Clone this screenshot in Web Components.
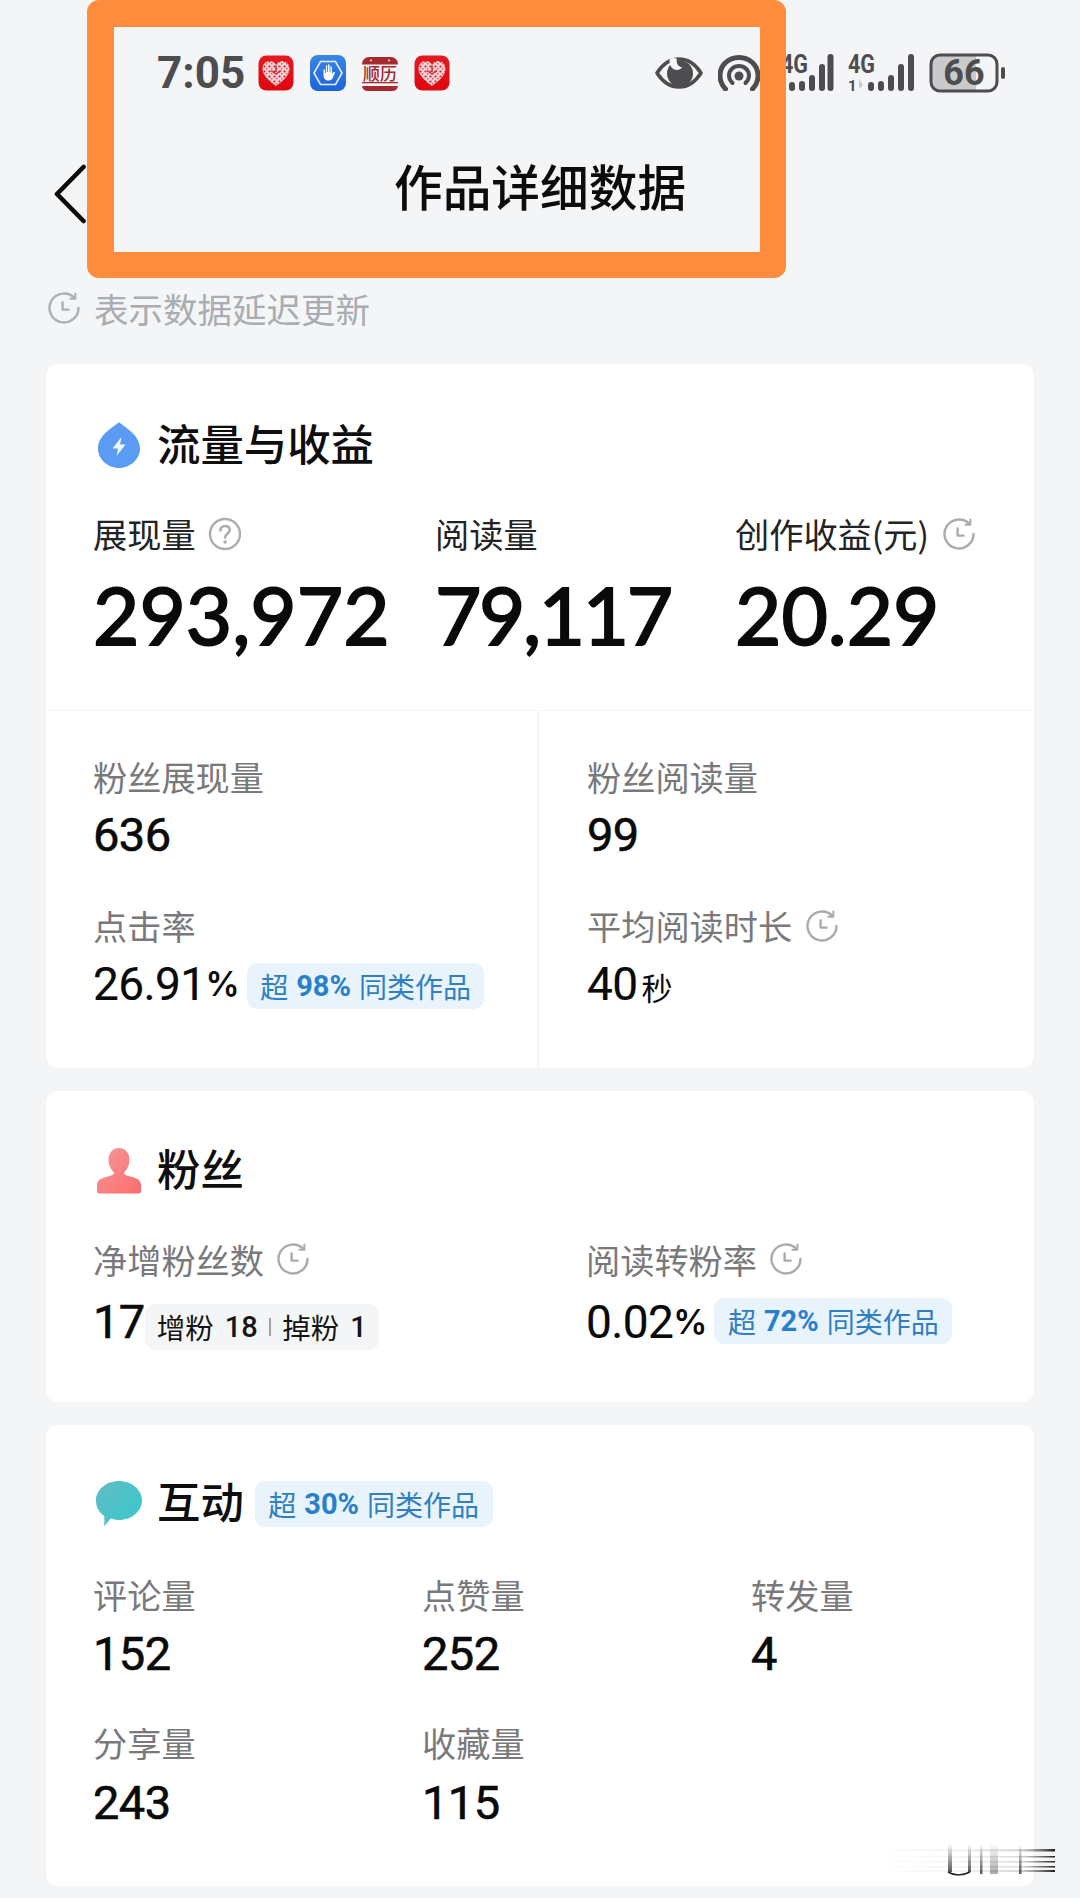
<!DOCTYPE html>
<html lang="zh">
<head>
<meta charset="utf-8">
<title>作品详细数据</title>
<style>
  html, body { margin: 0; padding: 0; }
  body {
    width: 1080px;
    height: 1898px;
    overflow: hidden;
    position: relative;
    background: #f4f5f7;
    font-family: "Noto Sans CJK SC", "Noto Sans", sans-serif;
  }
  stat-card { margin: 0 46px 23px; }
</style>
</head>
<body>
  <status-bar></status-bar>
  <app-header>作品详细数据</app-header>
  <delay-note>表示数据延迟更新</delay-note>

  <stat-card icon="drop" heading="流量与收益" style="--head-top:51px">
    <div slot="top" style="display:contents">
      <metric-item big label="展现量" value="293,972" mark="help"></metric-item>
      <metric-item big label="阅读量" value="79,117" style="--big-ls:-2.4px"></metric-item>
      <metric-item big label="创作收益(元)" value="20.29" mark="clock"></metric-item>
    </div>
    <metric-item label="粉丝展现量" value="636" style="--num-gap:8px"></metric-item>
    <metric-item label="粉丝阅读量" value="99" style="--num-gap:8px"></metric-item>
    <metric-item label="点击率" value="26.91" unit="%" style="--num-gap:8px"><beat-tag pct="98%" style="margin-top:4px"></beat-tag></metric-item>
    <metric-item label="平均阅读时长" value="40" unit="秒" mark="clock" style="--num-gap:8px"></metric-item>
  </stat-card>

  <stat-card icon="person" heading="粉丝" layout="pair" style="--head-top:50px">
    <metric-item label="净增粉丝数" value="17" mark="clock" style="--num-gap:12px"><split-tag></split-tag></metric-item>
    <metric-item label="阅读转粉率" value="0.02" unit="%" mark="clock" style="--num-gap:12px"><beat-tag pct="72%" style="margin-top:-2px"></beat-tag></metric-item>
  </stat-card>

  <stat-card icon="bubble" heading="互动" layout="triple" style="--head-top:49px">
    <beat-tag slot="head" pct="30%"></beat-tag>
    <metric-item label="评论量" value="152"></metric-item>
    <metric-item label="点赞量" value="252"></metric-item>
    <metric-item label="转发量" value="4"></metric-item>
    <metric-item label="分享量" value="243" style="--num-gap:10px"></metric-item>
    <metric-item label="收藏量" value="115" style="--num-gap:10px"></metric-item>
  </stat-card>

  <mark-box></mark-box>
  <fade-mark></fade-mark>

<script>
(function() {
	const CJK = '"Noto Sans CJK SC", "Noto Sans", sans-serif';
	const INK = '#4d4d4f';

	function define(name, css, html, setup) {
		const template = document.createElement('template');
		template.innerHTML = `<style>${css}</style>${html}`;
		customElements.define(name, class extends HTMLElement {
			connectedCallback() {
				if (this.shadowRoot) return;
				this.attachShadow({ mode: 'open' });
				this.shadowRoot.appendChild(template.content.cloneNode(true));
				if (setup) setup(this, this.shadowRoot);
			}
		});
	}

	// clock with a little refresh tail, used next to delayed numbers
	const clockSvg = (size, color) => `<svg width="${size}" height="${size}" viewBox="0 0 34 34" fill="none" stroke="${color}" stroke-width="2.4" stroke-linecap="round" stroke-linejoin="round">
		<path d="M31.5 17A14.5 14.5 0 1 1 27.6 7.1"/><path d="M28.4 2.6V7.8H23.4" stroke-width="2"/><path d="M15.6 11.5V18.6H21.6"/></svg>`;
	const helpSvg = (size) => `<svg width="${size}" height="${size}" viewBox="0 0 34 34" fill="none"><circle cx="17" cy="17" r="15" stroke="#adadad" stroke-width="2.4"/>
		<path d="M12.4 13.4c0-2.7 2-4.4 4.7-4.4s4.6 1.6 4.6 4c0 3.7-4.6 3.8-4.6 7.6" stroke="#adadad" stroke-width="2.6" stroke-linecap="round"/><circle cx="17.1" cy="25" r="1.8" fill="#adadad"/></svg>`;

	const heartIcon = (id) => `<svg width="36" height="36" viewBox="0 0 36 36">
		<defs><pattern id="${id}" width="5" height="5" patternUnits="userSpaceOnUse"><rect width="5" height="5" fill="#f6d0d2"/><circle cx="1.5" cy="1.5" r="1.1" fill="#c9242e"/><rect x="3" y="3" width="1.4" height="1.4" fill="#d8505a"/></pattern>
		<linearGradient id="${id}g" x1="0" y1="0" x2="0" y2="1"><stop offset="0" stop-color="#e41a20"/><stop offset="1" stop-color="#de0710"/></linearGradient></defs>
		<rect x=".5" y=".5" width="35" height="35" rx="8" fill="url(#${id}g)"/>
		<path d="M18 31C11 26 4.500 20.500 4.500 13.500 4.500 9 8 6 11.800 6 14.500 6 16.800 7.500 18 10 19.200 7.500 21.500 6 24.200 6 28 6 31.500 9 31.500 13.500 31.500 20.500 25 26 18 31Z" fill="url(#${id})"/>
		<path d="M18 10.500V17M13 15.500 18 19 23 15.500" stroke="#c9242e" stroke-width="1.400" fill="none"/></svg>`;

	define('status-bar', `
		:host { display: flex; align-items: center; height: 54px; margin-top: 46px; padding-left: 157px; box-sizing: border-box; color: ${INK}; }
		.time { font: 700 44px/54px Roboto, sans-serif; width: 88px; margin-right: 13px; white-space: nowrap; }
		.apps { display: flex; gap: 16px; }
		.apps svg, .sys svg { display: block; }
		.sys { display: flex; align-items: center; margin-left: 205px; }
		text { font-family: Roboto, sans-serif; font-weight: 700; fill: ${INK}; }
		.cal { font-family: ${CJK}; font-weight: 500; fill: #a02a2e; }
	`, `
		<div class="time">7:05</div>
		<div class="apps">
			${heartIcon('pddA')}
			<svg width="36" height="36" viewBox="0 0 36 36">
				<defs><linearGradient id="shield" x1="0" y1="0" x2="0" y2="1"><stop offset="0" stop-color="#3c86e4"/><stop offset="1" stop-color="#1c62dc"/></linearGradient></defs>
				<rect width="36" height="36" rx="8" fill="url(#shield)"/>
				<path d="M10.500 6.500H25.500L32 18 25.500 29.500H10.500L4 18Z" fill="none" stroke="#e6f0ff" stroke-width="1.600"/>
				<path d="M13.500 14.500V20c0 3.500 2 5.500 5 5.500 2.800 0 4-1.500 4.600-3.500l2-4.500-1.500-.8-1.700 2.400V11.500h-1.500V17h-.8V9.500h-1.700V17h-.8V10.500H15.900V18h-.8V14.500Z" fill="#fff"/>
			</svg>
			<svg width="36" height="36" viewBox="0 0 36 36" style="overflow:hidden">
				<path d="M0 9a7 7 0 0 1 7-7H29a7 7 0 0 1 7 7V9.500H0Z" fill="#a52b30"/>
				<path d="M0 31H36a6 6 0 0 1-6 5H6a6 6 0 0 1-6-5Z" fill="#a52b30"/>
				<rect y="27" width="36" height="1.300" fill="#a52b30"/>
				<circle cx="9" cy="5.500" r="1" fill="#f3d9d9"/><circle cx="27" cy="5.500" r="1" fill="#f3d9d9"/>
				<text class="cal" x="18" y="24.500" font-size="17" text-anchor="middle">顺历</text>
			</svg>
			${heartIcon('pddB')}
		</div>
		<div class="sys">
			<svg width="48" height="32" viewBox="0 0 48 32" style="margin-right:15px">
				<path d="M2 16C8 6.500 15.500 2 24 2s16 4.500 22 14C40 25.500 32.500 30 24 30S8 25.500 2 16Z" fill="none" stroke="${INK}" stroke-width="3.600" stroke-linejoin="round"/>
				<circle cx="25" cy="16.500" r="13" fill="${INK}"/>
				<path d="M14 5.500a11 11 0 0 1 8 0c-1 5 1 9 6 10-2 3.500-8 4-11 1.500-3-3-4.500-7.500-3-11.500Z" fill="#f4f5f7" transform="translate(3 -3) scale(.86)"/>
			</svg>
			<svg width="42" height="36" viewBox="0 0 42 36" style="margin-right:10px" fill="none" stroke="${INK}" stroke-linecap="round">
				<path d="M7.500 34C3.600 30 2 25.500 2 21 2 10.500 10 2.500 21 2.500S40 10.500 40 21c0 4.500-1.600 9-5.500 13" stroke-width="5"/>
				<path d="M14.500 28C12 25.500 11 23 11 20.500 11 15 15.500 11 21 11s10 4 10 9.500c0 2.500-1 5-3.500 7.500" stroke-width="4"/>
				<circle cx="21" cy="21" r="4.500" fill="${INK}" stroke="none"/>
			</svg>
			<svg width="64" height="54" viewBox="0 -8 64 54" style="margin-right:5px">
				<text x="38" y="19" font-size="25" text-anchor="end" textLength="27" lengthAdjust="spacingAndGlyphs">4G</text>
				<rect x="19" y="28" width="6" height="9" rx="3" fill="${INK}"/><rect x="29" y="27" width="6" height="10" rx="3" fill="${INK}"/><rect x="39" y="21" width="6" height="16" rx="3" fill="${INK}"/><rect x="49" y="10" width="6" height="27" rx="3" fill="${INK}"/><rect x="57.500" y="0" width="6" height="37" rx="3" fill="${INK}"/>
			</svg>
			<svg width="75" height="54" viewBox="0 -8 75 54" style="margin-right:15px">
				<text x="9" y="19" font-size="25" textLength="27" lengthAdjust="spacingAndGlyphs">4G</text>
				<text x="9" y="37" font-size="15">1</text>
				<path d="M20 25V35L24 31 Z" fill="#c9cacc"/>
				<rect x="29" y="28" width="6" height="9" rx="3" fill="${INK}"/><rect x="39" y="27" width="6" height="10" rx="3" fill="${INK}"/><rect x="49" y="21" width="6" height="16" rx="3" fill="${INK}"/><rect x="59" y="10" width="6" height="27" rx="3" fill="${INK}"/><rect x="69" y="0" width="6" height="37" rx="3" fill="${INK}"/>
			</svg>
			<svg width="76" height="40" viewBox="0 0 76 40">
				<path d="M11 2H47V38H11a9 9 0 0 1-9-9V11a9 9 0 0 1 9-9Z" fill="#c9cacc"/>
				<rect x="2" y="2" width="66" height="36" rx="9" fill="none" stroke="${INK}" stroke-width="3"/>
				<rect x="72" y="14" width="4" height="12" rx="2" fill="${INK}"/>
				<text x="35" y="32" font-size="36" text-anchor="middle">66</text>
			</svg>
		</div>
	`);

	define('app-header', `
		:host { display: flex; align-items: center; height: 96px; margin-top: 40px; padding-left: 54px; color: #0c0c0c; }
		svg { display: block; margin: 11px 308px 0 0; }
		.title { font: 500 48.7px/96px ${CJK}; white-space: nowrap; margin-top: -7px; }
	`, `
		<svg width="32" height="60" viewBox="0 0 32 60" fill="none" stroke="#0a0a0a" stroke-width="4.600" stroke-linecap="round" stroke-linejoin="round"><path d="M29.500 3 3 30 29.500 57"/></svg>
		<div class="title"><slot></slot></div>
	`);

	define('delay-note', `
		:host { display: flex; align-items: center; gap: 13px; height: 52px; margin: 46px 0 30px; padding-left: 47px; color: #a9acb0; font: 400 34.5px/52px ${CJK}; }
		svg { display: block; }
	`, `${clockSvg(34, '#aeb1b4')}<div><slot></slot></div>`);

	const cardIcons = {
		drop: `<svg width="42" height="46" viewBox="0 0 42 46"><path d="M21 0C25 4.500 42 12 42 26.500 42 37 32.500 46 21 46S0 37 0 26.500C0 12 17 4.500 21 0Z" fill="#5a9bf4"/><path d="M23.500 15 14.500 26.500H20L18.500 34 27.500 22.500H22Z" fill="#f2f7ff"/></svg>`,
		person: `<svg width="44" height="46" viewBox="0 0 44 46"><defs><linearGradient id="pg" x1="0" y1="0" x2="1" y2="1"><stop offset="0" stop-color="#f39a9a"/><stop offset="1" stop-color="#fd6c6e"/></linearGradient></defs><path d="M22 0c6 0 10.500 4.800 10.500 11.500 0 5-2.200 10-5.500 13 0 2 2 3 7 4.300 6 1.500 10 3.200 10 8.700V43q0 2.500-2.500 2.500h-39Q0 45.500 0 43v-5.500c0-5.500 4-7.200 10-8.700 5-1.300 7-2.300 7-4.300-3.300-3-5.500-8-5.500-13C11.500 4.800 16 0 22 0Z" fill="url(#pg)"/></svg>`,
		bubble: `<svg width="46" height="45" viewBox="0 0 46 45"><defs><linearGradient id="bg" x1="0" y1="0" x2="1" y2="1"><stop offset="0" stop-color="#62bcc4"/><stop offset="1" stop-color="#36c9cd"/></linearGradient></defs><path d="M23 0C35.700 0 46 8.800 46 19.500S35.700 39 23 39c-3 0-5.800-.5-8.500-1.400C12.500 40.500 10 43.500 8 45c.5-3 .5-6 .2-10C3 31.500 0 26 0 19.500 0 8.800 10.300 0 23 0Z" fill="url(#bg)"/></svg>`,
	};

	define('stat-card', `
		:host { display: block; background: #fff; border-radius: 12px; padding-top: var(--head-top, 50px); overflow: hidden; }
		.head { display: flex; align-items: center; height: 60px; padding-left: 50px; }
		.ic { display: flex; justify-content: center; width: 46px; margin-right: 15px; }
		.ic svg { display: block; }
		.name { font: 500 43.4px/60px ${CJK}; color: #0e0e0e; white-space: nowrap; margin: -7px 11px 0 0; }
		.top { display: none; grid-template-columns: 342px 300px auto; padding: 39px 0 57px 47px; border-bottom: 1.500px solid #f5f5f6; }
		.grid { display: grid; grid-template-columns: 491px 1fr; padding: 46px 0 57.5px; position: relative; row-gap: 45px; }
		.rule { position: absolute; top: 0; bottom: 0; left: 491px; width: 1.500px; background: #f5f5f6; }
		:host([heading="流量与收益"]) .top { display: grid; }
		:host([heading="流量与收益"]) ::slotted(metric-item) { padding-left: 47px; }
		:host([heading="流量与收益"]) ::slotted(metric-item:nth-of-type(even)) { padding-left: 50px; }
		:host([layout]) .rule { display: none; }
		:host([layout="pair"]) .grid { padding: 39px 0 54px; grid-template-columns: 491px 1fr; }
		:host([layout="pair"]) ::slotted(metric-item:first-of-type) { padding-left: 47px; }
		:host([layout="pair"]) ::slotted(metric-item) { padding-left: 49px; }
		:host([layout="triple"]) .grid { padding: 41px 0 57px 47px; grid-template-columns: 329px 329px 1fr; row-gap: 43px; }
	`, `
		<div class="head"><span class="ic"></span><div class="name"></div><slot name="head"></slot></div>
		<div class="top"><slot name="top"></slot></div>
		<div class="grid"><div class="rule"></div><slot></slot></div>
	`, (el, root) => {
		root.querySelector('.ic').innerHTML = cardIcons[el.getAttribute('icon')];
		root.querySelector('.name').textContent = el.getAttribute('heading');
	});

	define('metric-item', `
		:host { display: block; box-sizing: border-box; white-space: nowrap; }
		.label { display: flex; align-items: center; gap: 12.500px; height: 44px; padding-bottom: 5px; box-sizing: border-box; font: 400 34.2px/39px ${CJK}; color: #79797b; }
		:host([big]) .label { color: #232323; }
		.label svg { display: block; }
		.row { display: flex; align-items: center; height: 52px; margin-top: var(--num-gap, 9px); color: #0a0a0a; }
		.num { font: 400 47px/52px Roboto, sans-serif; letter-spacing: -.6px; -webkit-text-stroke: .6px #0a0a0a; }
		:host([unit]) .num { font-size: 46px; -webkit-text-stroke: .2px #0a0a0a; }
		:host([big]) .row { height: 80px; margin-top: 15px; }
		:host([big]) .num { font: 400 80px/80px Lato, sans-serif; letter-spacing: var(--big-ls, 0); -webkit-text-stroke: 1.900px #0a0a0a; padding-top: 2px; }
		.unit { font: 600 34px/52px Inter, sans-serif; align-self: flex-end; }
		:host([unit="秒"]) .unit { font: 400 31px/52px ${CJK}; margin: 0 0 -3px 4px; }
		::slotted(*) { margin-left: 7px; }
	`, `
		<div class="label"><span class="t"></span><span class="m"></span></div>
		<div class="row"><span class="num"></span><span class="unit"></span><slot></slot></div>
	`, (el, root) => {
		root.querySelector('.t').textContent = el.getAttribute('label');
		root.querySelector('.num').textContent = el.getAttribute('value');
		root.querySelector('.unit').textContent = el.getAttribute('unit') || '';
		const mark = el.getAttribute('mark');
		const m = root.querySelector('.m');
		if (mark === 'clock') m.innerHTML = clockSvg(34, '#ababab');
		else if (mark === 'help') m.innerHTML = helpSvg(34);
		else m.remove();
	});

	define('beat-tag', `
		:host { display: inline-flex; align-items: center; height: 46px; padding: 0 13.500px; border-radius: 10px; background: #e8f3fb; color: #2f7fc1; font: 400 28px/46px ${CJK}; white-space: nowrap; }
		b { font: 700 29px/46px Roboto, sans-serif; color: #2680cc; margin: 0 8px; }
	`, `超<b></b>同类作品`, (el, root) => {
		root.querySelector('b').textContent = el.getAttribute('pct');
	});

	define('split-tag', `
		:host { display: inline-flex; align-items: center; height: 46px; padding: 0 12px; border-radius: 10px; background: #f4f5f7; color: #151515; font: 400 28.5px/46px ${CJK}; white-space: nowrap; margin: 10px 0 0 0 !important; }
		b { font: 500 29px/46px Roboto, sans-serif; margin-left: 11px; }
		i { display: block; width: 1.500px; height: 18px; background: #a0a0a0; margin: 0 11.500px; }
	`, `增粉<b>18</b><i></i>掉粉<b>1</b>`);

	// orange annotation drawn on top of the screenshot
	define('mark-box', `
		:host { position: absolute; left: 87px; top: 0; width: 699px; height: 278px; box-sizing: border-box; border: solid #fd8d3c; border-width: 27px 26px 26px 27px; border-radius: 12px; }
	`, ``);

	// faint smeared watermark in the corner
	define('fade-mark', `
		:host { position: absolute; left: 880px; top: 1838px; width: 180px; height: 42px; }
		svg { display: block; }
	`, `<svg width="180" height="42" viewBox="0 0 180 42">
		<defs>
			<linearGradient id="h"><stop offset="0" stop-color="#222" stop-opacity="0"/><stop offset=".45" stop-color="#666" stop-opacity=".07"/><stop offset=".8" stop-color="#666" stop-opacity=".25"/><stop offset="1" stop-color="#111" stop-opacity=".95"/></linearGradient>
			<linearGradient id="v" x1="0" y1="0" x2="0" y2="1"><stop offset="0" stop-color="#111" stop-opacity="0"/><stop offset="1" stop-color="#111" stop-opacity=".7"/></linearGradient>
		</defs>
		<rect y="11" width="175" height="2.500" fill="url(#h)"/><rect y="18" width="175" height="1.500" fill="url(#h)"/><rect y="23" width="175" height="1.500" fill="url(#h)"/><rect y="28" width="175" height="1.500" fill="url(#h)"/><rect y="32" width="175" height="2" fill="url(#h)"/>
		<rect x="68" y="6" width="4" height="28" fill="url(#v)"/><rect x="88" y="6" width="3" height="28" fill="url(#v)"/>
		<path d="M68 34Q78 40 90 34" fill="none" stroke="#222" stroke-width="1.500"/>
		<rect x="100" y="6" width="2.500" height="30" fill="url(#v)"/><rect x="110" y="6" width="8" height="30" fill="url(#v)" opacity=".5"/><rect x="139" y="6" width="2.500" height="30" fill="url(#v)"/>
	</svg>`);
})();
</script>
</body>
</html>
